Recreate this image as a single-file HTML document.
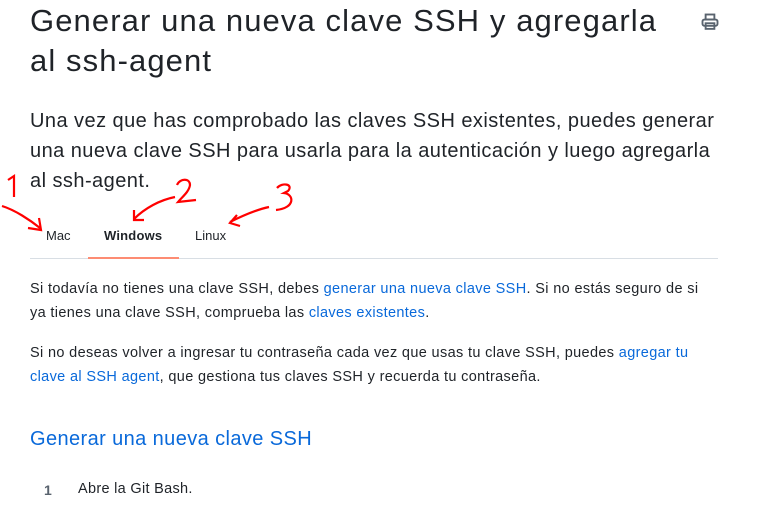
<!DOCTYPE html>
<html><head><meta charset="utf-8"><style>
body{margin:0;background:#fff;font-family:"Liberation Sans",sans-serif;color:#1f2328;width:768px;height:514px;overflow:hidden;position:relative}
.a{position:absolute;white-space:nowrap}
h1{position:absolute;left:30px;top:1px;margin:0;font-size:31px;font-weight:400;line-height:40px;letter-spacing:1.1px;white-space:nowrap}
.lead{position:absolute;left:30px;top:106px;font-size:20px;line-height:30px;margin:0;letter-spacing:0.45px;white-space:nowrap}
.p{position:absolute;left:30px;font-size:14.5px;line-height:24px;margin:0;letter-spacing:0.35px;white-space:nowrap}
a{color:#0969da;text-decoration:none}
</style></head><body>
<h1>Generar una nueva clave SSH y agregarla<br>al ssh-agent</h1>
<svg class="a" style="left:700px;top:12px" width="20" height="20" viewBox="0 0 16 16" fill="none" stroke="#59636e" stroke-width="1.5"><rect x="4.5" y="2" width="7" height="4"/><rect x="2" y="6" width="12" height="5" rx="1.5"/><rect x="4.5" y="9" width="7" height="4.5"/></svg>
<p class="lead">Una vez que has comprobado las claves SSH existentes, puedes generar<br>una nueva clave SSH para usarla para la autenticación y luego agregarla<br>al ssh-agent.</p>
<div class="a" style="left:46px;top:228px;font-size:13px">Mac</div>
<div class="a" style="left:104px;top:228px;font-size:13px;font-weight:700;letter-spacing:0.2px">Windows</div>
<div class="a" style="left:195px;top:228px;font-size:13px">Linux</div>
<div class="a" style="left:30px;top:258px;width:688px;height:1px;background:#d8dee4"></div>
<div class="a" style="left:88px;top:257px;width:91px;height:2px;background:#fd8c73"></div>
<svg class="a" style="left:0;top:170px" width="320" height="70" fill="none" stroke="#f00" stroke-width="2.2">
<path d="M8 10 L14 6 L14 27"/><path d="M2 36 C15 40 30 50 40 58 M28 58 L41 60 L39 48"/>
<path d="M177 15 C180 8 190 8 190 15 C189 22 182 27 178 32 L196 30"/><path d="M175 27 C160 30 145 38 134 49 M134 40 L134 50 L144 50"/>
<path d="M277 18 C282 12 294 14 288 21 L284 23 C294 24 296 38 276 40"/><path d="M269 37 C255 40 242 46 230 52 M237 45 L230 53 L240 56"/>
</svg>
<p class="p" style="top:277px">Si todavía no tienes una clave SSH, debes <a>generar una nueva clave SSH</a>. Si no estás seguro de si<br>ya tienes una clave SSH, comprueba las <a>claves existentes</a>.</p>
<p class="p" style="top:341px">Si no deseas volver a ingresar tu contraseña cada vez que usas tu clave SSH, puedes <a>agregar tu</a><br><a>clave al SSH agent</a>, que gestiona tus claves SSH y recuerda tu contraseña.</p>
<div class="a" style="left:30px;top:428px;font-size:20px;color:#0969da;letter-spacing:0.4px">Generar una nueva clave SSH</div>
<div class="a" style="left:44px;top:482px;font-size:14px;font-weight:700;color:#59636e">1</div>
<div class="a" style="left:78px;top:481px;font-size:14.5px;letter-spacing:0.3px">Abre la Git Bash.</div>
</body></html>
